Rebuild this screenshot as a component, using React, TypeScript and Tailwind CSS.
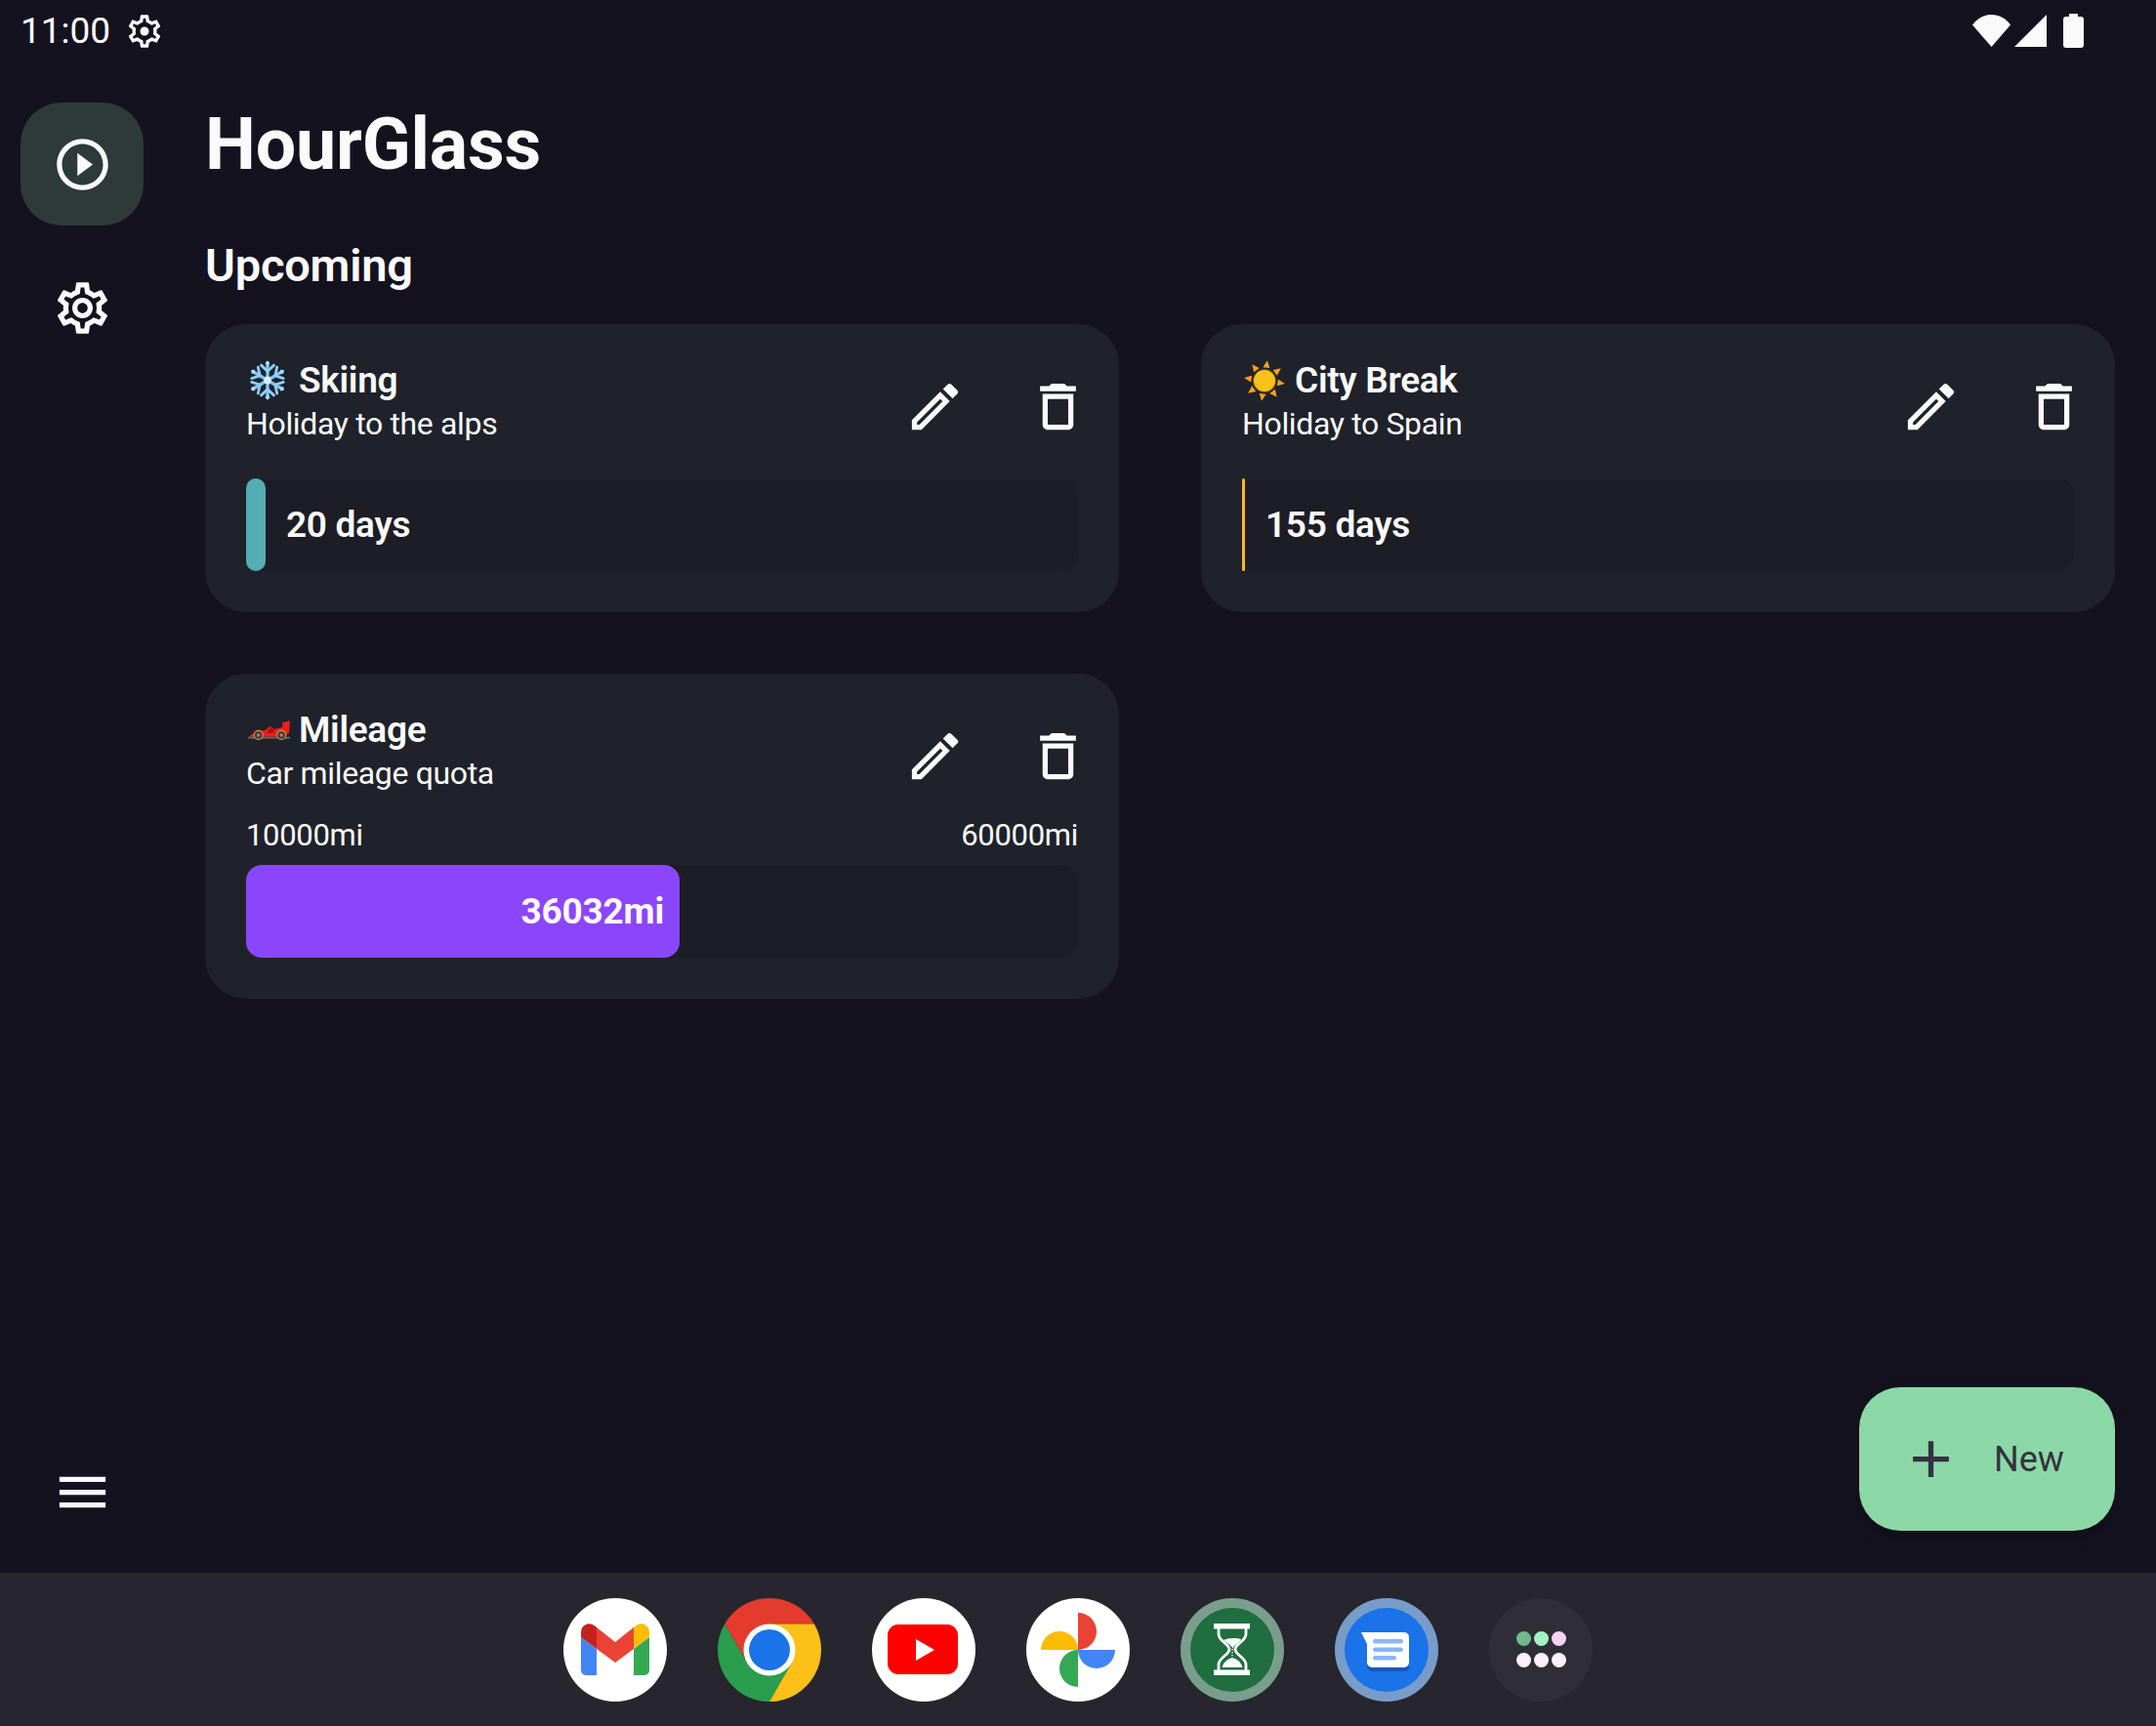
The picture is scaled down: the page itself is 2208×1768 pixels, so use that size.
import { MdAdd, MdMenu, MdOutlineDelete, MdOutlineEdit } from "react-icons/md";

const GEAR =
  "M19.43 12.98c.04-.32.07-.64.07-.98 0-.34-.03-.66-.07-.98l2.11-1.65c.19-.15.24-.42.12-.64l-2-3.46c-.09-.16-.26-.25-.44-.25-.06 0-.12.01-.17.03l-2.49 1c-.52-.4-1.08-.73-1.69-.98l-.38-2.65C14.46 2.18 14.25 2 14 2h-4c-.25 0-.46.18-.49.42l-.38 2.65c-.61.25-1.17.59-1.69.98l-2.49-1c-.06-.02-.12-.03-.18-.03-.17 0-.34.09-.43.25l-2 3.46c-.13.22-.07.49.12.64l2.11 1.65c-.04.32-.07.65-.07.98 0 .33.03.66.07.98l-2.11 1.65c-.19.15-.24.42-.12.64l2 3.46c.09.16.26.25.44.25.06 0 .12-.01.17-.03l2.49-1c.52.4 1.08.73 1.69.98l.38 2.65c.03.24.24.42.49.42h4c.25 0 .46-.18.49-.42l.38-2.65c.61-.25 1.17-.59 1.69-.98l2.49 1c.06.02.12.03.18.03.17 0 .34-.09.43-.25l2-3.46c.12-.22.07-.49-.12-.64l-2.11-1.65zm-1.98-1.71c.04.31.05.52.05.73 0 .21-.02.43-.05.73l-.14 1.13.89.7 1.08.84-.7 1.21-1.27-.51-1.04-.42-.9.68c-.43.32-.84.56-1.25.73l-1.06.43-.16 1.13-.2 1.35h-1.4l-.19-1.35-.16-1.13-1.06-.43c-.43-.18-.83-.41-1.23-.71l-.91-.7-1.06.43-1.27.51-.7-1.21 1.08-.84.89-.7-.14-1.13c-.03-.31-.05-.54-.05-.74s.02-.43.05-.73l.14-1.13-.89-.7-1.08-.84.7-1.21 1.27.51 1.04.42.9-.68c.43-.32.84-.56 1.25-.73l1.06-.43.16-1.13.2-1.35h1.39l.19 1.35.16 1.13 1.06.43c.43.18.83.41 1.23.71l.91.7 1.06-.43 1.27-.51.7 1.21-1.07.85-.89.7.14 1.13z";

function GearIcon({ size, dot }: { size: number; dot?: boolean }) {
  return (
    <svg width={size} height={size} viewBox="0 0 24 24" fill="#fafafa">
      <path d={GEAR} />
      {dot ? (
        <circle cx="12" cy="12" r="2.7" />
      ) : (
        <path d="M12 8c-2.21 0-4 1.79-4 4s1.79 4 4 4 4-1.79 4-4-1.79-4-4-4zm0 6c-1.1 0-2-.9-2-2s.9-2 2-2 2 .9 2 2-.9 2-2 2z" />
      )}
    </svg>
  );
}

function Snowflake() {
  const arm = (
    <g>
      <path d="M20 20V2.500" stroke="#7cc4f2" strokeWidth="3.400" strokeLinecap="round" />
      <path d="M13.500 5L20 11L26.500 5" stroke="#8fd0f7" strokeWidth="2.800" fill="none" strokeLinecap="round" />
      <path d="M20 0.500L22.500 3L20 5.500L17.500 3Z" fill="#a9dcf9" />
    </g>
  );
  return (
    <svg width="40" height="41" viewBox="0 0 40 40" preserveAspectRatio="none">
      {[0, 60, 120, 180, 240, 300].map((a) => (
        <g key={a} transform={`rotate(${a} 20 20)`}>
          {arm}
        </g>
      ))}
      <circle cx="20" cy="20" r="3.800" fill="#d6f0fd" />
    </svg>
  );
}

function Sun() {
  return (
    <svg width="42" height="42" viewBox="0 0 42 42">
      {[8, 53, 98, 143, 188, 233, 278, 323].map((a) => (
        <path key={a} transform={`rotate(${a} 21 21)`} d="M21 0L24.500 7.500H17.500Z" fill="#f7a11b" />
      ))}
      <circle cx="21" cy="21" r="12" fill="#6b5316" />
      <circle cx="21" cy="21" r="11" fill="#fcc21b" />
    </svg>
  );
}

function RaceCar() {
  return (
    <svg width="43" height="20" viewBox="0 0 44 20">
      <path d="M1 17C4 13 10 11 18 10L23 6L28 9L36 7L36 2L44 0L43 13L37 17Z" fill="#e8201f" />
      <path d="M21 10L25 7L28 10L26 13H20Z" fill="#a8101a" />
      <path d="M0 17H44V19H0Z" fill="#5f5f64" />
      <circle cx="11" cy="15" r="4.600" fill="#3d3d40" stroke="#f29a1f" strokeWidth="1.100" />
      <circle cx="11" cy="15" r="1.800" fill="#8a8a8a" />
      <circle cx="35" cy="15" r="4.600" fill="#3d3d40" stroke="#f29a1f" strokeWidth="1.100" />
      <circle cx="35" cy="15" r="1.800" fill="#8a8a8a" />
    </svg>
  );
}

function Gmail() {
  return (
    <svg width="106" height="106" viewBox="0 0 106 106">
      <circle cx="53" cy="53" r="53" fill="#ffffff" />
      <path d="M18 40L34 52V79H23a5 5 0 0 1-5-5Z" fill="#4285f4" />
      <path d="M88 40L72 52V79H83a5 5 0 0 0 5-5Z" fill="#34a853" />
      <path d="M18 40V35a8.500 8.500 0 0 1 13.500-7L34 30V52Z" fill="#c5221f" />
      <path d="M34 30L53 45L72 30V52L53 66L34 52Z" fill="#ea4335" />
      <path d="M72 30L74.500 28A8.500 8.500 0 0 1 88 35V40L72 52Z" fill="#fbbc04" />
    </svg>
  );
}

function Chrome() {
  return (
    <svg width="106" height="106" viewBox="0 0 106 106">
      <path d="M7.100 26.500A53 53 0 0 1 98.900 26.500H53L30 66Z" fill="#e33b2e" />
      <path d="M7.100 26.500L30 66H76L53 106A53 53 0 0 1 7.100 26.500Z" fill="#2a9d4e" />
      <path d="M98.900 26.500A53 53 0 0 1 53 106L76 66L53 26.500Z" fill="#fdc016" />
      <circle cx="53" cy="53" r="26.500" fill="#ffffff" />
      <circle cx="53" cy="53" r="21" fill="#1a73e8" />
    </svg>
  );
}

function YouTube() {
  return (
    <svg width="106" height="106" viewBox="0 0 106 106">
      <circle cx="53" cy="53" r="53" fill="#ffffff" />
      <rect x="16" y="27" width="72" height="51" rx="11" fill="#ff0000" />
      <path d="M45 42L64 53L45 64Z" fill="#ffffff" />
    </svg>
  );
}

function Photos() {
  return (
    <svg width="106" height="106" viewBox="0 0 106 106">
      <circle cx="53" cy="53" r="53" fill="#ffffff" />
      <path d="M53 15A19 19 0 0 1 53 53Z" fill="#ea4335" />
      <path d="M15 53A19 19 0 0 1 53 53Z" fill="#fbbc04" />
      <path d="M53 91A19 19 0 0 1 53 53Z" fill="#34a853" />
      <path d="M91 53A19 19 0 0 1 53 53Z" fill="#4285f4" />
    </svg>
  );
}

function HourGlassApp() {
  return (
    <svg width="106" height="106" viewBox="0 0 106 106">
      <circle cx="53" cy="53" r="53" fill="#7a9e8d" />
      <circle cx="53" cy="53" r="43" fill="#206d40" />
      <rect x="34" y="26" width="37" height="5.500" fill="#ffffff" />
      <rect x="34" y="73.500" width="37" height="5.500" fill="#ffffff" />
      <path
        d="M39 31V37C39 44 50 47 50 52.500C50 58 39 61 39 68V74M67 31V37C67 44 56 47 56 52.500C56 58 67 61 67 68V74"
        stroke="#ffffff"
        strokeWidth="2.800"
        fill="none"
      />
      <path d="M44 43C48 41 56 40 62 42C60 46 55 48 53.500 51.500C51 47 47 46 44 43Z" fill="#ffffff" />
      <path d="M42.500 71C44 65 49 62 53 61C57 62 62 65 63.500 71Z" fill="#ffffff" />
      <path d="M53 52V60" stroke="#ffffff" strokeWidth="1.200" strokeDasharray="1.500 1.500" />
    </svg>
  );
}

function Messages() {
  return (
    <svg width="106" height="106" viewBox="0 0 106 106">
      <circle cx="53" cy="53" r="53" fill="#789cca" />
      <circle cx="53" cy="53" r="43" fill="#1a73e8" />
      <path d="M33 40H76V71a4 4 0 0 1-4 4H38a5 5 0 0 1-5-5Z" fill="#1559b8" />
      <path d="M27 35H71a5 5 0 0 1 5 5V66a5 5 0 0 1-5 5H38a5 5 0 0 1-5-5V47Z" fill="#ffffff" />
      <rect x="39" y="42" width="31" height="4.500" rx="2.200" fill="#8ab4f8" />
      <rect x="39" y="50.500" width="31" height="4.500" rx="2.200" fill="#8ab4f8" />
      <rect x="39" y="59" width="24" height="4.500" rx="2.200" fill="#8ab4f8" />
    </svg>
  );
}

function AppsButton() {
  const dots = ["bg-[#6dba8b]", "bg-[#a4f1c2]", "bg-[#f6d3f7]", "bg-[#fdf0fb]", "bg-[#fdf0fb]", "bg-[#fdf0fb]"];
  return (
    <div className="w-[106px] h-[106px] rounded-full bg-[#2f2e37] flex items-center justify-center">
      <div className="grid grid-cols-3 gap-x-[3px] gap-y-[7px]">
        {dots.map((d, i) => (
          <div key={i} className={`w-[15px] h-[15px] rounded-full ${d}`} />
        ))}
      </div>
    </div>
  );
}

type Item = {
  title: string;
  subtitle: string;
  icon: React.ReactNode;
  progress: number;
  color: string;
  value: string;
  range?: [string, string];
};

const upcoming: Item[] = [
  { title: "Skiing", subtitle: "Holiday to the alps", icon: <Snowflake />, progress: 20, color: "bg-[#55adb4]", value: "20 days" },
  { title: "City Break", subtitle: "Holiday to Spain", icon: <Sun />, progress: 3, color: "bg-[#fbb52a]", value: "155 days" },
  {
    title: "Mileage",
    subtitle: "Car mileage quota",
    icon: <RaceCar />,
    progress: 444,
    color: "bg-[#8b46fb]",
    value: "36032mi",
    range: ["10000mi", "60000mi"],
  },
];

function Card({ item }: { item: Item }) {
  const inside = !!item.range;
  return (
    <div className="bg-[#1f222b] rounded-[42px] px-[42px] pt-[42px] pb-[42px] text-[#fafafa]">
      <div className="flex items-center h-[86px]">
        <div className="flex-1 -mt-[10px]">
          <div className="flex items-center h-[45px]">
            <span className="w-[54px] h-[45px] flex items-center justify-start pl-[2px]">{item.icon}</span>
            <span className="text-[37px] font-semibold leading-[45px] tracking-[-0.3px]">{item.title}</span>
          </div>
          <div className="text-[32px] font-normal leading-[45px] tracking-[-0.35px]">{item.subtitle}</div>
        </div>
        <div className="flex -mr-[42px] -mt-[2px]">
          <div className="w-[126px] flex justify-center">
            <MdOutlineEdit size={63} color="#fafafa" />
          </div>
          <div className="w-[126px] flex justify-center">
            <MdOutlineDelete size={63} color="#fafafa" />
          </div>
        </div>
      </div>

      {item.range ? (
        <div className="flex justify-between text-[31px] font-normal leading-[45px] tracking-[-0.3px] h-[68px] pb-[8px] items-end">
          <span>{item.range[0]}</span>
          <span>{item.range[1]}</span>
        </div>
      ) : (
        <div className="h-[30px]" />
      )}

      <div className="h-[95px] rounded-[16px] bg-[#1d1d26] flex items-center">
        <div
          className={`h-full rounded-[16px] ${item.color} flex items-center justify-end`}
          style={{ width: item.progress }}
        >
          {inside && <span className="text-[37px] font-bold mr-[16px] tracking-[-0.2px]">{item.value}</span>}
        </div>
        {!inside && <span className="text-[37px] font-semibold ml-[21px] tracking-[-0.3px]">{item.value}</span>}
      </div>
    </div>
  );
}

export default function App() {
  return (
    <div
      className="w-[2208px] h-[1768px] bg-[#151220] flex flex-col overflow-hidden"
      style={{ fontFamily: "Roboto, sans-serif" }}
    >
      <div className="h-[63px] shrink-0 flex items-center pl-[21px] pr-[74px] text-[#fafafa]">
        <span className="text-[37px] font-normal leading-none">11:00</span>
        <span className="ml-[15px]">
          <GearIcon size={40} dot />
        </span>
        <div className="ml-auto flex items-center gap-[4px]">
          <svg width="39" height="33" viewBox="0 0 39 33" fill="#fafafa">
            <path d="M0 10.500C5 3.500 12 0 19.500 0S34 3.500 39 10.500L19.500 33Z" />
          </svg>
          <svg width="33" height="33" viewBox="0 0 33 33" fill="#fafafa">
            <path d="M33 0V33H0Z" />
          </svg>
          <svg className="ml-[13px]" width="21" height="35" viewBox="0 0 21 35" fill="#fafafa">
            <path d="M6 0H15V3H18a3 3 0 0 1 3 3V32a3 3 0 0 1-3 3H3a3 3 0 0 1-3-3V6a3 3 0 0 1 3-3H6Z" />
          </svg>
        </div>
      </div>

      <div className="flex-1 flex min-h-0 relative">
        <nav className="w-[168px] shrink-0 flex flex-col items-center pt-[42px] pb-[20px]">
          <div className="w-[126px] h-[126px] rounded-[42px] bg-[#2e3a3a] flex items-center justify-center">
            <svg width="63" height="63" viewBox="0 0 24 24" fill="#fafafa">
              <path d="M10 16.500l6-4.500-6-4.500v9zM12 2C6.480 2 2 6.480 2 12s4.480 10 10 10 10-4.480 10-10S17.520 2 12 2zm0 18c-4.410 0-8-3.590-8-8s3.590-8 8-8 8 3.590 8 8-3.590 8-8 8z" />
            </svg>
          </div>
          <div className="w-[126px] h-[126px] mt-[21px] flex items-center justify-center">
            <GearIcon size={63} />
          </div>
          <div className="mt-auto w-[126px] h-[126px] flex items-center justify-center">
            <MdMenu size={63} color="#fafafa" />
          </div>
        </nav>

        <main className="flex-1 pl-[42px] pr-[42px] pt-[42px] text-[#fafafa]">
          <h1 className="text-[73.5px] font-bold leading-[84px] tracking-[-0.2px] translate-y-[1px]">HourGlass</h1>
          <h2 className="text-[47px] font-semibold leading-[56px] mt-[55px] tracking-[-0.2px]">Upcoming</h2>
          <div className="grid grid-cols-2 gap-x-[84px] gap-y-[63px] mt-[32px] items-start">
            {upcoming.map((item) => (
              <Card key={item.title} item={item} />
            ))}
          </div>
        </main>

        <button className="absolute right-[42px] bottom-[43px] w-[262px] h-[147px] rounded-[42px] bg-[#8bd8a6] text-[#34323f] flex items-center pl-[42px] shadow-[0_6px_14px_rgba(0,0,0,0.25)]">
          <MdAdd size={63} />
          <span className="ml-[33px] text-[36px] leading-none">New</span>
        </button>
      </div>

      <div className="h-[157px] shrink-0 bg-[#27262e] flex items-center justify-center gap-[52px]">
        <Gmail />
        <Chrome />
        <YouTube />
        <Photos />
        <HourGlassApp />
        <Messages />
        <AppsButton />
      </div>
    </div>
  );
}
